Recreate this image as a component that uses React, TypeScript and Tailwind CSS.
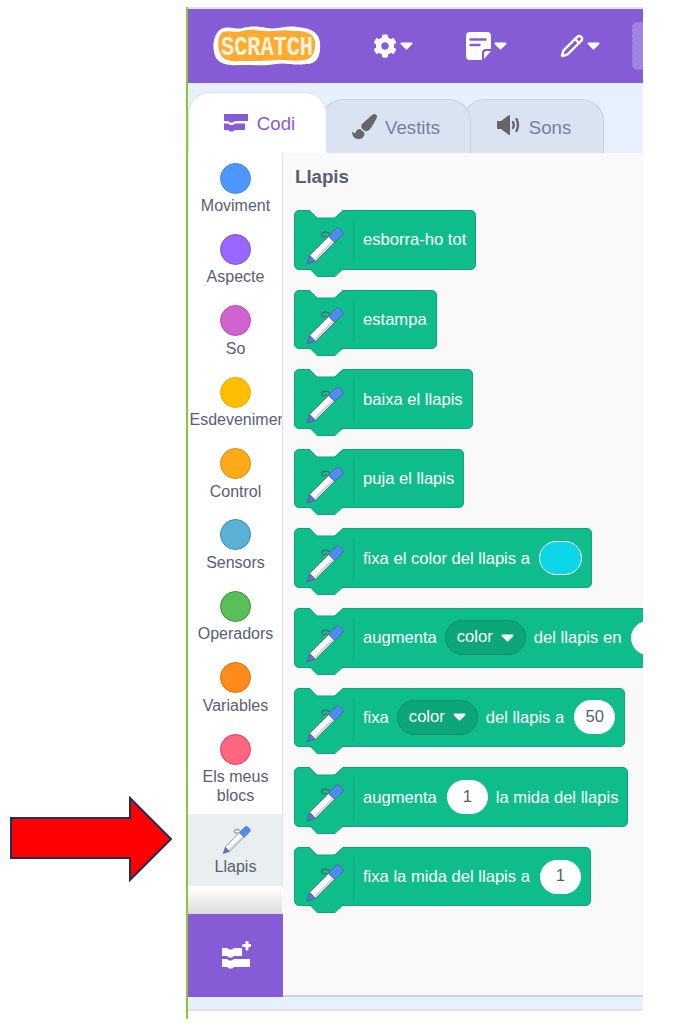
import { FaCog, FaPaintBrush } from "react-icons/fa";
import { Pencil } from "lucide-react";

const categories = [
  { name: "Moviment", color: "bg-[#4c97ff] border-[#3d85e8]" },
  { name: "Aspecte", color: "bg-[#9966ff] border-[#7d4fdd]" },
  { name: "So", color: "bg-[#cf63cf] border-[#bd42bd]" },
  { name: "Esdeveniments", color: "bg-[#ffbf00] border-[#e6ac00]", left: true },
  { name: "Control", color: "bg-[#ffab19] border-[#cf8b17]" },
  { name: "Sensors", color: "bg-[#5cb1d6] border-[#2e8eb8]" },
  { name: "Operadors", color: "bg-[#59c059] border-[#389438]" },
  { name: "Variables", color: "bg-[#ff8c1a] border-[#db6e00]" },
  { name: "Els meus blocs", color: "bg-[#ff6680] border-[#ff3355]", tall: true },
];

const Caret = () => (
  <svg width="13" height="8" viewBox="0 0 13 8" className="shrink-0">
    <path d="M1.5 1.5h10L6.5 6.5z" fill="#fff" stroke="#fff" strokeWidth="2" strokeLinejoin="round" />
  </svg>
);

const CodeIcon = () => (
  <svg width="24" height="19" viewBox="0 0 24 19" className="shrink-0">
    <path d="M0 1h24v7H11L9 9.5H6L4 8H0z" fill="#855cd6" />
    <path d="M0 10.5h4L6 12h3l2-1.5h10V17H11l-2 1.5H6L4 17H0z" fill="#855cd6" />
  </svg>
);

const ExtensionIcon = () => (
  <svg width="30" height="30" viewBox="0 0 30 30">
    <path d="M1 7h5l2 1.5h3L13 7h8v8h-8l-2 1.5H8L6 15H1z" fill="#fff" />
    <path d="M1 18h5l2 1.5h3l2-1.5h16v8H13l-2 1.5H8L6 26H1z" fill="#fff" />
    <path d="M26 1v7M22.500 4.500h7" stroke="#fff" strokeWidth="3" strokeLinecap="round" />
  </svg>
);

const SpeakerIcon = () => (
  <svg width="24" height="22" viewBox="0 0 24 22" className="shrink-0">
    <path d="M1 7h4l8-6c.6 0 1 .4 1 1v18c0 .6-.4 1-1 1l-8-6H1z" fill="#666" />
    <path d="M17 8q1.500 3 0 6M20.500 5q3 6 0 12" fill="none" stroke="#666" strokeWidth="2.400" strokeLinecap="round" />
  </svg>
);

const PenIcon = ({ small }: { small?: boolean }) => (
  <svg width={small ? 30 : 40} height={small ? 30 : 40} viewBox="0 0 40 40" className="shrink-0">
    <path d="M26 8C22 4 16 7 18 10c1 2 3 1 5 0" fill="none" stroke="#4a5a78" strokeWidth="1.1" />
    <g transform="translate(3 38) rotate(-45)">
      <path d="M0 0l8-4v8z" fill="#4c78e8" stroke="#575e75" strokeWidth="0.8" strokeLinejoin="round" />
      <rect x="8" y="-4.200" width="27" height="8.400" fill="#fff" stroke="#575e75" strokeWidth="0.8" />
      <rect x="9" y="1.400" width="25" height="2.200" fill="#cfd3dc" />
      <path d="M35-4.500h10c2 0 3 1 3 2.500v4c0 1.500-1 2.500-3 2.500H35z" fill="#4c8cf5" stroke="#575e75" strokeWidth="0.8" />
    </g>
  </svg>
);

const Dropdown = ({ label }: { label: string }) => (
  <span className="mb-[2px] flex h-[35px] items-center gap-[8px] rounded-full border border-[#0b8e69] bg-[#0da57a] pl-[11px] pr-[11px] text-white">
    {label}
    <Caret />
  </span>
);

const NumberInput = ({ value, wide }: { value: string; wide?: boolean }) => (
  <span className={`mb-[2px] flex h-[34px] w-[41px] shrink-0 items-center justify-center rounded-full bg-white text-[#575e75] ${wide ? "ml-[2px]" : ""}`}>
    {value}
  </span>
);

const PenBlock = ({ children }: { children: React.ReactNode }) => (
  <div className="relative flex h-[59.600px] w-fit shrink-0 items-center gap-[8px] whitespace-nowrap rounded-[5px] border border-[#0da57a] bg-[#0fbd8c] pl-[68px] pr-[9px] pt-[2px] text-[16.600px] text-white">
    <svg width="38" height="10" viewBox="0 0 38 10" className="absolute left-[14px] top-[-1px]">
      <path d="M0 0l8 8h17l9-8z" fill="#f9f9f9" />
      <path d="M0 0l8 8h18l9-8" fill="none" stroke="#0da57a" strokeWidth="1" />
    </svg>
    <svg width="40" height="10" viewBox="0 0 40 10" className="absolute bottom-[-9px] left-[13px]">
      <path d="M1 0l8 8h18l9-8z" fill="#0fbd8c" />
      <path d="M1 0l8 8.500h18l9-8.500" fill="none" stroke="#0da57a" strokeWidth="1" />
    </svg>
    <span className="absolute left-[9px] top-[15px]">
      <PenIcon />
    </span>
    <span className="absolute left-[58px] top-[8px] h-[44px] w-px bg-[#0da57a]" />
    {children}
  </div>
);

export default function App() {
  return (
    <div className="flex h-[1024px] overflow-hidden bg-white font-['Liberation_Sans',sans-serif]">
      <div className="w-[186px] shrink-0 pl-[9px] pt-[796px]">
        <svg width="165" height="86" viewBox="0 0 165 86">
          <path d="M2 22h119V2l41 41-41 41V62H2z" fill="#ff0000" stroke="#1f2f4f" strokeWidth="2" />
        </svg>
      </div>

      <div className="mt-[7px] flex h-[1012px] w-[457px] shrink-0 flex-col overflow-hidden border-l-2 border-[#8cc63f]">
        <div className="h-[2px] shrink-0 bg-[#dfe3dc]" />

        <header className="flex h-[74px] shrink-0 items-center bg-[#855cd6]">
          <svg width="108" height="40" viewBox="0 0 108 40" className="ml-[25px] mt-[-1px] shrink-0">
            <path d="M8 3c8-4 14 1 22-1s14-2 24 0 18-3 30-1c10 1 22 3 23 16s-3 21-14 21c-12 2-20-2-30 0s-20 1-30 1-24 2-30-7C-1 24-1 9 8 3z" fill="#fff" />
            <path d="M10 6c6-2 12 1 20-1s14-1 22 0 18-2 28 0c8 0 21 0 22 11s-4 18-12 18c-10 2-18-1-28 0s-18 1-28 1-22 2-26-6C4 22 4 10 10 6z" fill="#ffab2e" />
            <text x="54" y="28.500" textAnchor="middle" fontFamily="Liberation Mono" fontWeight="700" fontSize="28" fill="#fff3dc" textLength="92" lengthAdjust="spacingAndGlyphs">
              SCRATCH
            </text>
          </svg>
          <div className="ml-[52px] flex items-center gap-[3px]">
            <FaCog size={24} color="#fff" />
            <Caret />
          </div>
          <div className="ml-[53px] flex items-center gap-[3px]">
            <svg width="25" height="28" viewBox="0 0 25 28">
              <path d="M4 0h17a4 4 0 0 1 4 4v13h-5a4 4 0 0 0-4 4v7H4a4 4 0 0 1-4-4V4a4 4 0 0 1 4-4z" fill="#fff" />
              <path d="M25 19l-7 8v-5a3 3 0 0 1 3-3z" fill="#fff" />
              <path d="M4.500 7.500h15M4.500 13h9" stroke="#855cd6" strokeWidth="2.400" strokeLinecap="round" />
            </svg>
            <Caret />
          </div>
          <div className="ml-[53px] flex items-center gap-[3px]">
            <Pencil size={24} color="#fff" strokeWidth={2.4} />
            <Caret />
          </div>
          <div className="ml-[32px] h-[48px] w-[30px] shrink-0 rounded-l-[5px] border border-dashed border-[#9274dc] bg-[#a184e0]" />
        </header>

        <div className="flex h-[70px] shrink-0 items-end bg-[#e6f0ff] text-[18.670px] text-[#76819d]">
          <div className="relative z-20 flex h-[61px] w-[139px] shrink-0 justify-center gap-[9px] rounded-t-[22px] border border-b-0 border-[#d9e3f2] bg-white pl-[4px] pt-[17px] text-[#855cd6]">
            <span className="mt-[3px]">
              <CodeIcon />
            </span>
            Codi
          </div>
          <div className="relative z-10 ml-[-6px] flex h-[54px] w-[150px] shrink-0 justify-center gap-[8px] rounded-t-[22px] border border-b-0 border-[#c5d0e2] bg-[#d9e3f2] pt-[14px]">
            <FaPaintBrush size={25} color="#666" />
            Vestits
          </div>
          <div className="ml-[-8px] flex h-[54px] w-[141px] shrink-0 justify-center gap-[9px] rounded-t-[22px] border border-b-0 border-[#c5d0e2] bg-[#d9e3f2] pt-[14px]">
            <SpeakerIcon />
            Sons
          </div>
        </div>

        <div className="flex min-h-0 flex-1">
          <nav className="flex w-[95px] shrink-0 flex-col bg-white text-[16px] text-[#575e75]">
            <div className="flex flex-col overflow-hidden border-r border-[#dfe3ea] pt-[9.500px]">
              {categories.map((c) => (
                <div key={c.name} className={`flex w-[95px] shrink-0 flex-col items-center overflow-hidden text-center leading-[19px] ${c.tall ? "h-[80px]" : "h-[71.400px]"}`}>
                  <span className={`h-[31px] w-[31px] shrink-0 rounded-full border ${c.color}`} />
                  <span className={`mt-[2.500px] ${c.left ? "w-[120px] whitespace-nowrap pl-[14px] text-left" : "w-[90px]"}`}>{c.name}</span>
                </div>
              ))}
              <div className="flex h-[72px] w-[95px] shrink-0 flex-col items-center bg-[#e9eef2] pt-[11px] leading-[19px]">
                <PenIcon small />
                <span className="mt-[2px]">Llapis</span>
              </div>
            </div>
            <div className="mt-[1px] w-[94px] flex-1 bg-gradient-to-b from-white to-[#dcdcdc]" />
            <div className="flex h-[83px] shrink-0 items-center justify-center bg-[#855cd6]">
              <ExtensionIcon />
            </div>
          </nav>

          <main className="min-w-0 flex-1 overflow-hidden border-b-2 border-[#c9d3e4] bg-[#f9f9f9] pl-[11px]">
            <h2 className="ml-[1px] mt-[13px] text-[18.670px] font-bold leading-[22px] text-[#575e75]">Llapis</h2>
            <div className="mt-[22px] flex flex-col items-start gap-[20px]">
              <PenBlock>esborra-ho tot</PenBlock>
              <PenBlock>estampa</PenBlock>
              <PenBlock>baixa el llapis</PenBlock>
              <PenBlock>puja el llapis</PenBlock>
              <PenBlock>
                fixa el color del llapis a
                <span className="mb-[2px] ml-[1px] h-[34px] w-[43px] rounded-full border border-white bg-[#0cd6e8]" />
              </PenBlock>
              <PenBlock>
                augmenta
                <Dropdown label="color" />
                del llapis en
                <NumberInput value="10" wide />
              </PenBlock>
              <PenBlock>
                fixa
                <Dropdown label="color" />
                del llapis a
                <NumberInput value="50" wide />
              </PenBlock>
              <PenBlock>
                augmenta
                <NumberInput value="1" wide />
                la mida del llapis
              </PenBlock>
              <PenBlock>
                fixa la mida del llapis a
                <NumberInput value="1" wide />
              </PenBlock>
            </div>
          </main>
        </div>

        <div className="h-[14px] shrink-0 border-b-2 border-[#dfe3ea] bg-[#e6f0ff]" />
        <div className="h-[8px] shrink-0 bg-white" />
      </div>
    </div>
  );
}
